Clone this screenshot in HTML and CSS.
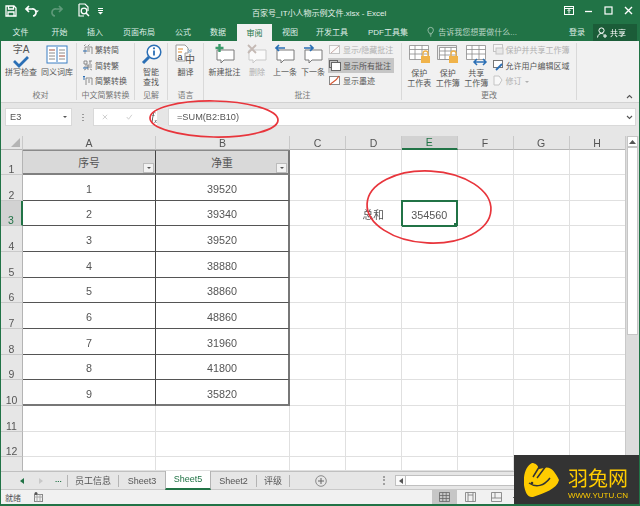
FILE: index.html
```html
<!DOCTYPE html>
<html lang="zh-CN">
<head>
<meta charset="utf-8">
<title>Excel</title>
<link rel="stylesheet" href="styles.css">
</head>
<body>
<div class="window">
  <header class="titlebar">
    <div class="qat">
      <svg class="q-save" width="14" height="14" viewBox="0 0 14 14"><path d="M2 2h8l2 2v8H2z M4.500 2v3h5V2 M4 12V8h6v4" fill="none" stroke="#fff" stroke-width="1.300"/></svg>
      <svg class="q-undo" width="16" height="14" viewBox="0 0 16 14"><path d="M5 2L2 5l3 3M2 5h6a3.500 3.500 0 0 1 1 7" fill="none" stroke="#fff" stroke-width="1.700"/><path d="M13 6.500h4l-2 2z" fill="#fff" transform="translate(-2 0)"/></svg>
      <svg class="q-redo" width="16" height="14" viewBox="0 0 16 14"><path d="M9 2l3 3-3 3M12 5H6a3.500 3.500 0 0 0-1 7" fill="none" stroke="#5f9a7a" stroke-width="1.700"/></svg>
      <svg class="q-prev" width="14" height="15" viewBox="0 0 14 15"><path d="M2 1h6l3 3v4M2 1v12h5" fill="none" stroke="#fff" stroke-width="1.200"/><circle cx="7" cy="8" r="2.800" fill="none" stroke="#fff" stroke-width="1.300"/><path d="M9 10l3 3" stroke="#fff" stroke-width="1.500"/></svg>
      <svg class="q-more" width="7" height="8" viewBox="0 0 7 8"><path d="M1 1.500h5M1 3.500h5" stroke="#fff"/><path d="M1 5h5L3.500 7.500z" fill="#fff"/></svg>
    </div>
    <div class="doc-title">百家号_IT小人物示例文件.xlsx - Excel</div>
    <div class="winctl">
      <svg width="10" height="9" viewBox="0 0 10 9"><rect x=".5" y=".5" width="9" height="8" fill="none" stroke="#fff"/><path d="M.5 2.500h9M5 3.500v4M3.500 5L5 3.500 6.500 5" fill="none" stroke="#fff"/></svg>
      <svg width="10" height="9" viewBox="0 0 10 9"><path d="M1 5.500h7" stroke="#fff" stroke-width="1.300"/></svg>
      <svg width="10" height="9" viewBox="0 0 10 9"><rect x="1" y="1" width="7" height="7" fill="none" stroke="#fff" stroke-width="1.200"/></svg>
      <svg width="10" height="9" viewBox="0 0 10 9"><path d="M1 1l7 7M8 1L1 8" stroke="#fff" stroke-width="1.400"/></svg>
    </div>
  </header>

  <nav class="tabs">
    <span class="tab tab-file">文件</span>
    <span class="tab">开始</span>
    <span class="tab">插入</span>
    <span class="tab">页面布局</span>
    <span class="tab">公式</span>
    <span class="tab">数据</span>
    <span class="tab tab-active">审阅</span>
    <span class="tab">视图</span>
    <span class="tab">开发工具</span>
    <span class="tab">PDF工具集</span>
    <span class="tell">
      <svg width="8" height="11" viewBox="0 0 8 11"><path d="M2.500 7.500C2 6 1 5.500 1 4a3 3 0 0 1 6 0c0 1.500-1 2-1.500 3.500zM3 9h2M3.300 10.400h1.400" fill="none" stroke="#b8d3c4" stroke-width=".8"/></svg>
      告诉我您想要做什么...
    </span>
    <span class="login">登录</span>
    <span class="share">
      <svg width="10" height="11" viewBox="0 0 10 11"><circle cx="4.500" cy="3.500" r="2.600" fill="none" stroke="#fff"/><path d="M.5 10.500c.5-3 2-4 4-4 1 0 1.500.3 2 .7M6 9h4M8 7v4" fill="none" stroke="#fff"/></svg>
      共享
    </span>
  </nav>

  <section class="ribbon">
    <div class="group g-proof">
      <div class="group-body">
        <div class="big w32">
          <div class="spell-ic">
            <span class="spell-t">字A</span>
            <svg width="18" height="13" viewBox="0 0 18 13"><path d="M2 6l5 5 9-9" fill="none" stroke="#2b6fb5" stroke-width="2.800"/></svg>
          </div>
          <span>拼写检查</span>
        </div>
        <div class="big w32 gap3">
          <svg width="22" height="21" viewBox="0 0 22 21"><rect x="1" y="2" width="20" height="17" fill="#fff" stroke="#3b7fc4"/><path d="M11 3v15" stroke="#3b7fc4"/><path d="M3 6h6M3 9h6M3 12h6M3 15h6M13 6h6M13 9h6M13 12h6M13 15h6" stroke="#8a8a8a"/><path d="M3 6h6M13 12h6" stroke="#d98a7a"/></svg>
          <span>同义词库</span>
        </div>
      </div>
      <div class="group-label">校对</div>
    </div>

    <div class="group g-conv">
      <div class="group-body list">
        <div class="line"><svg width="10" height="11" viewBox="0 0 10 11"><path d="M1 2l1.500-1.500M5 2l1.500-1.500M2 3h7v7M2 3v7M4 5h3M4 7h3" fill="none" stroke="#777" stroke-width=".8"/><path d="M0 7h4" stroke="#2b6fb5"/></svg><span>繁转简</span></div>
        <div class="line"><svg width="10" height="11" viewBox="0 0 10 11"><path d="M1 1h3v3H1zM6 1h3M7 1v3M2 5h7M1 7h8M5 5v5M3 9l-2 1M7 9l2 1" fill="none" stroke="#777" stroke-width=".8"/><path d="M0 8h5" stroke="#2b6fb5"/></svg><span>简转繁</span></div>
        <div class="line"><svg width="10" height="11" viewBox="0 0 10 11"><path d="M3 3h6v7M3 3v7M5 5h2M5 7h2" fill="none" stroke="#777" stroke-width=".8"/><path d="M1 1v4M0 2l1-1 1 1" fill="none" stroke="#2b6fb5"/></svg><span>简繁转换</span></div>
      </div>
      <div class="group-label">中文简繁转换</div>
    </div>

    <div class="group g-insight">
      <div class="group-body">
        <div class="big w32">
          <svg width="21" height="21" viewBox="0 0 21 21"><circle cx="13" cy="8" r="6.800" fill="#fff" stroke="#2b6fb5" stroke-width="1.500"/><path d="M8 13l-6 6" stroke="#2b6fb5" stroke-width="3"/><path d="M13 6.500v5" stroke="#2b6fb5" stroke-width="1.800"/><circle cx="13" cy="4.300" r="1.100" fill="#2b6fb5"/></svg>
          <span>智能<br>查找</span>
        </div>
      </div>
      <div class="group-label">见解</div>
    </div>

    <div class="group g-lang">
      <div class="group-body">
        <div class="big w36">
          <svg width="21" height="21" viewBox="0 0 21 21"><path d="M1 1h9l3 3v5h-3v8H1z" fill="#fff" stroke="#9a9a9a"/><path d="M3 5h5M3 8h4" stroke="#e08b2c"/><path d="M13 5l3 3m0-3v3h-3" fill="none" stroke="#7fa8cc" stroke-width=".9"/><text x="2.500" y="16" class="ic-a">a</text><text x="10" y="19" class="ic-s">中</text></svg>
          <span>翻译</span>
        </div>
      </div>
      <div class="group-label">语言</div>
    </div>

    <div class="group g-comment">
      <div class="group-body">
        <div class="big w33 first-c">
          <svg width="22" height="21" viewBox="0 0 22 21"><path d="M3 6h17v10H10l-3 3v-3H3z" fill="#fff" stroke="#7a7a7a"/><path d="M5.500 0v8M1.500 4h8" stroke="#3a9a6a" stroke-width="2.400"/></svg>
          <span>新建批注</span>
        </div>
        <div class="big w32 dim">
          <svg width="22" height="21" viewBox="0 0 22 21"><path d="M3 6h17v10H10l-3 3v-3H3z" fill="#fafafa" stroke="#c9c9c9"/><path d="M2 1l8 8M10 1L2 9" stroke="#c4b9b4" stroke-width="1.800"/></svg>
          <span>删除</span>
        </div>
        <div class="big w24">
          <svg width="22" height="21" viewBox="0 0 22 21"><path d="M3 6h17v10H10l-3 3v-3H3z" fill="#fff" stroke="#7a7a7a"/><path d="M11 4H2M5 1L2 4l3 3" fill="none" stroke="#2b6fb5" stroke-width="1.700"/></svg>
          <span>上一条</span>
        </div>
        <div class="big w24 gap4">
          <svg width="22" height="21" viewBox="0 0 22 21"><path d="M3 6h17v10H10l-3 3v-3H3z" fill="#fff" stroke="#7a7a7a"/><path d="M2 4h9M8 1l3 3-3 3" fill="none" stroke="#2b6fb5" stroke-width="1.700"/></svg>
          <span>下一条</span>
        </div>
        <div class="list c-list">
          <div class="line dim"><svg width="12" height="11" viewBox="0 0 12 11"><rect x=".5" y="1.500" width="10" height="8" fill="#fafafa" stroke="#c4c4c4"/><path d="M2 9l8-7" stroke="#c9a9a4"/></svg><span>显示/隐藏批注</span></div>
          <div class="line on"><svg width="12" height="11" viewBox="0 0 12 11"><rect x=".5" y=".5" width="8" height="7" fill="none" stroke="#666"/><rect x="2.500" y="2.500" width="9" height="8" fill="#fff" stroke="#666"/></svg><span>显示所有批注</span></div>
          <div class="line"><svg width="12" height="11" viewBox="0 0 12 11"><rect x=".5" y="1.500" width="10" height="8" fill="#fff" stroke="#888"/><path d="M1 10C3 6 6 8 10 1" fill="none" stroke="#d4532f" stroke-width="1.200"/></svg><span>显示墨迹</span></div>
        </div>
      </div>
      <div class="group-label">批注</div>
    </div>

    <div class="group g-change">
      <div class="group-body">
        <div class="big w28 first">
          <svg width="23" height="22" viewBox="0 0 23 22"><path d="M1.500 1.500h19v14h-19zM1.500 5.500h19M1.500 10h19M7 1.500v14M14 1.500v14" fill="#fff" stroke="#8a8a8a" stroke-width=".8"/><rect x="13" y="12" width="9" height="7" fill="#f0b34a"/><path d="M15 12V9.500a2.500 2.500 0 0 1 5 0V12" fill="none" stroke="#f0b34a" stroke-width="1.300"/></svg>
          <span>保护<br>工作表</span>
        </div>
        <div class="big w28">
          <svg width="23" height="22" viewBox="0 0 23 22"><path d="M1.500 1.500h19v14h-19z" fill="#eee" stroke="#8a8a8a" stroke-width=".8"/><path d="M3.500 3.500h17v12h-17zM3.500 7h17M3.500 11h17M9 3.500v12M15 3.500v12" fill="#fff" stroke="#8a8a8a" stroke-width=".8"/><rect x="13" y="12" width="9" height="7" fill="#f0b34a"/><path d="M15 12V9.500a2.500 2.500 0 0 1 5 0V12" fill="none" stroke="#f0b34a" stroke-width="1.300"/></svg>
          <span>保护<br>工作簿</span>
        </div>
        <div class="big w28">
          <svg width="23" height="22" viewBox="0 0 23 22"><path d="M1.500 1.500h19v14h-19zM1.500 5.500h19M1.500 10h19M7 1.500v14M14 1.500v14" fill="#fff" stroke="#8a8a8a" stroke-width=".8"/><path d="M9 18h12M12 15l-3 3 3 3M18 15l3 3-3 3" fill="none" stroke="#2b6fb5" stroke-width="1.500"/></svg>
          <span>共享<br>工作簿</span>
        </div>
        <div class="list d-list">
          <div class="line dim"><svg width="11" height="11" viewBox="0 0 11 11"><rect x=".5" y=".5" width="9" height="7" fill="#f6f6f6" stroke="#c4c4c4"/><rect x="3" y="4" width="7" height="6" fill="#e8e8e8" stroke="#c4c4c4"/></svg><span>保护并共享工作簿</span></div>
          <div class="line"><svg width="11" height="11" viewBox="0 0 11 11"><rect x=".5" y=".5" width="9" height="7" fill="#fff" stroke="#777"/><path d="M3 10l6-6" stroke="#2b6fb5" stroke-width="1.800"/></svg><span>允许用户编辑区域</span></div>
          <div class="line dim"><svg width="11" height="11" viewBox="0 0 11 11"><path d="M1 1h5l3 4-3 5H1z" fill="#f8f8f8" stroke="#c4c4c4"/></svg><span>修订 <i class="caret"></i></span></div>
        </div>
      </div>
      <div class="group-label">更改</div>
    </div>

    <div class="collapse"><svg width="7" height="5" viewBox="0 0 7 5"><path d="M1 4l2.500-2.500L6 4" fill="none" stroke="#555" stroke-width="1.100"/></svg></div>
  </section>

  <section class="fbar">
    <div class="namebox"><span>E3</span><i class="caret dark"></i></div>
    <div class="grip"></div>
    <div class="fbtns">
      <svg width="8" height="8" viewBox="0 0 8 8"><path d="M1 1l6 6M7 1L1 7" stroke="#c4c4c4" stroke-width="1.100"/></svg>
      <svg width="9" height="8" viewBox="0 0 9 8"><path d="M1 4l2.500 3L8 1" fill="none" stroke="#c4c4c4" stroke-width="1.100"/></svg>
      <em>f<sub>x</sub></em>
    </div>
    <div class="finput"><span>=SUM(B2:B10)</span><svg width="7" height="5" viewBox="0 0 7 5"><path d="M1 1l2.500 2.500L6 1" fill="none" stroke="#555" stroke-width="1.100"/></svg></div>
  </section>

  <main class="sheet-area">
    <div class="band"></div>
    <div class="grid-row">
      <div class="grid">
        <div class="corner"><i></i></div>
        <div class="ch">A</div><div class="ch">B</div><div class="ch">C</div><div class="ch">D</div><div class="ch ch-sel">E</div><div class="ch">F</div><div class="ch">G</div><div class="ch ch-end">H</div>

        <div class="rh">1</div><div class="c thead">序号<i class="filter"></i></div><div class="c thead thead-r">净重<i class="filter"></i></div><div class="c"></div><div class="c"></div><div class="c"></div><div class="c"></div><div class="c"></div><div class="c"></div>
        <div class="rh">2</div><div class="c td">1</div><div class="c td td-r">39520</div><div class="c"></div><div class="c"></div><div class="c"></div><div class="c"></div><div class="c"></div><div class="c"></div>
        <div class="rh rh-sel">3</div><div class="c td">2</div><div class="c td td-r">39340</div><div class="c"></div><div class="c txt">总和</div><div class="c sel">354560<i class="handle"></i></div><div class="c"></div><div class="c"></div><div class="c"></div>
        <div class="rh">4</div><div class="c td">3</div><div class="c td td-r">39520</div><div class="c"></div><div class="c"></div><div class="c"></div><div class="c"></div><div class="c"></div><div class="c"></div>
        <div class="rh">5</div><div class="c td">4</div><div class="c td td-r">38880</div><div class="c"></div><div class="c"></div><div class="c"></div><div class="c"></div><div class="c"></div><div class="c"></div>
        <div class="rh">6</div><div class="c td">5</div><div class="c td td-r">38860</div><div class="c"></div><div class="c"></div><div class="c"></div><div class="c"></div><div class="c"></div><div class="c"></div>
        <div class="rh">7</div><div class="c td">6</div><div class="c td td-r">48860</div><div class="c"></div><div class="c"></div><div class="c"></div><div class="c"></div><div class="c"></div><div class="c"></div>
        <div class="rh">8</div><div class="c td">7</div><div class="c td td-r">31960</div><div class="c"></div><div class="c"></div><div class="c"></div><div class="c"></div><div class="c"></div><div class="c"></div>
        <div class="rh">9</div><div class="c td">8</div><div class="c td td-r">41800</div><div class="c"></div><div class="c"></div><div class="c"></div><div class="c"></div><div class="c"></div><div class="c"></div>
        <div class="rh">10</div><div class="c td td-b">9</div><div class="c td td-r td-b">35820</div><div class="c"></div><div class="c"></div><div class="c"></div><div class="c"></div><div class="c"></div><div class="c"></div>
        <div class="rh">11</div><div class="c"></div><div class="c"></div><div class="c"></div><div class="c"></div><div class="c"></div><div class="c"></div><div class="c"></div><div class="c"></div>
        <div class="rh">12</div><div class="c"></div><div class="c"></div><div class="c"></div><div class="c"></div><div class="c"></div><div class="c"></div><div class="c"></div><div class="c"></div>
        <div class="rh rh-cut"></div><div class="c"></div><div class="c"></div><div class="c"></div><div class="c"></div><div class="c"></div><div class="c"></div><div class="c"></div><div class="c"></div>
      </div>
      <div class="vscroll">
        <div class="vbtn"><svg width="7" height="4" viewBox="0 0 7 4"><path d="M0 4l3.500-4L7 4z" fill="#555"/></svg></div>
        <div class="vthumb"></div>
      </div>
    </div>
    <div class="sheetbar">
      <div class="nav">
        <svg width="4" height="6" viewBox="0 0 4 6"><path d="M4 0v6L0 3z" fill="#217346"/></svg>
        <svg width="4" height="6" viewBox="0 0 4 6"><path d="M0 0v6l4-3z" fill="#c9c9c9"/></svg>
        <span class="dots">...</span>
      </div>
      <div class="stab">员工信息</div>
      <div class="stab">Sheet3</div>
      <div class="stab stab-on">Sheet5</div>
      <div class="stab">Sheet2</div>
      <div class="stab">评级</div>
      <div class="plus"><svg width="12" height="12" viewBox="0 0 12 12"><circle cx="6" cy="6" r="5.300" fill="none" stroke="#8a8a8a"/><path d="M3 6h6M6 3v6" stroke="#666"/></svg></div>
      <div class="vdots"></div>
      <div class="hscroll"><span class="hbtn"><svg width="4" height="6" viewBox="0 0 4 6"><path d="M4 0v6L0 3z" fill="#555"/></svg></span></div>
    </div>
  </main>

  <footer class="status">
    <span class="ready">就绪</span>
    <svg class="macro" width="10" height="10" viewBox="0 0 10 10"><rect x=".5" y="2.500" width="8" height="7" fill="none" stroke="#888"/><path d="M.5 5h8M3 2.500v7M6 2.500v7" stroke="#aaa"/><circle cx="2" cy="1.500" r="1.500" fill="#555"/></svg>
    <div class="views">
      <span class="view view-on"><svg width="11" height="10" viewBox="0 0 11 10"><path d="M.5.500h10v9H.5zM.5 3.500h10M.5 6.500h10M3.800.5v9M7.200.5v9" fill="none" stroke="#666" stroke-width=".8"/></svg></span>
      <span class="view"><svg width="11" height="10" viewBox="0 0 11 10"><path d="M.5.500h10v9H.5zM3 .5v9M8 .5v9M3 3h5" fill="none" stroke="#777" stroke-width=".8"/></svg></span>
      <span class="view"><svg width="11" height="10" viewBox="0 0 11 10"><path d="M.5.500h10v9H.5zM.5 6h10M4 .5V6" fill="none" stroke="#777" stroke-width=".8"/></svg></span>
      <span class="zoomminus"></span>
    </div>
  </footer>

  <svg class="marks" width="640" height="506" viewBox="0 0 640 506">
    <ellipse cx="214" cy="119" rx="64" ry="18" fill="none" stroke="#e8353c" stroke-width="1.700" transform="rotate(1 214 119)"/>
    <ellipse cx="429" cy="207" rx="62" ry="36" fill="none" stroke="#e8353c" stroke-width="1.700" transform="rotate(3 429 207)"/>
  </svg>

  <aside class="badge">
    <svg width="36" height="36" viewBox="0 0 36 36"><path d="M8 0C11 0 14 2 15 6L20 5C27 3 31 9 35 17 33 26 20 30 9 34 3 35 1 28 0 22-1 12 2 3 8 0z" fill="#ffcc00"/><path d="M9 14L17 1M13 15L22 3" stroke="#333" stroke-width="1.500"/><circle cx="8" cy="20" r="1.300" fill="#333"/><path d="M5 20C12 25 20 23 26 15" fill="none" stroke="#333" stroke-width="1.500"/></svg>
    <div class="brand">
      <strong>羽兔网</strong>
      <small>WWW.YUTU.CN</small>
    </div>
  </aside>
</div>
</body>
</html>
```

FILE: styles.css
```css
* { box-sizing: border-box; }
html, body { margin: 0; padding: 0; }
body {
  width: 640px;
  height: 506px;
  overflow: hidden;
  background: #fff;
  font-family: "Liberation Sans", "Noto Sans CJK SC", sans-serif;
  color: #555;
}
.window {
  position: relative;
  width: 640px;
  height: 506px;
  display: flex;
  flex-direction: column;
  border-left: 1px solid #217346;
  border-bottom: 2px solid #217346;
  border-right: 1px solid #217346;
  overflow: hidden;
  filter: blur(.3px);
}

/* title */
.titlebar {
  height: 24px;
  flex: none;
  background: #217346;
  color: #e6f0ea;
  display: flex;
  align-items: center;
}
.qat { display: flex; align-items: center; padding-left: 3px; height: 100%; margin-top: -3px; }
.qat svg { flex: none; }
.q-undo { margin-left: 6px; }
.q-redo { margin-left: 10px; }
.q-prev { margin-left: 11px; }
.q-more { margin-left: 5.500px; }
.doc-title {
  margin-left: 148.500px;
  font-size: 8px;
  white-space: nowrap;
}
.winctl { margin-left: auto; display: flex; gap: 10px; padding-right: 5px; margin-top: -4px; }

/* tabs */
.tabs {
  height: 17px;
  flex: none;
  background: #217346;
  color: #dfeee6;
  display: flex;
  align-items: stretch;
  font-size: 8px;
  white-space: nowrap;
}
.tab { display: flex; align-items: center; justify-content: center; flex: none; padding-bottom: 2px; }
.tab:nth-child(1) { width: 39px; }
.tab:nth-child(2) { width: 39px; }
.tab:nth-child(3) { width: 32px; }
.tab:nth-child(4) { width: 56px; }
.tab:nth-child(5) { width: 32px; }
.tab:nth-child(6) { width: 38px; }
.tab:nth-child(7) { width: 35px; }
.tab:nth-child(8) { width: 36px; }
.tab:nth-child(9) { width: 48px; }
.tab:nth-child(10) { width: 64px; }
.tab-active { background: #f1f1f1; color: #217346; padding-bottom: 1px; }
.tell { display: flex; align-items: center; flex: none; gap: 4px; margin-left: 7px; width: 90px; color: #b8d3c4; padding-bottom: 2px; }
.login { display: flex; align-items: center; flex: none; margin-left: 52px; padding-bottom: 2px; }
.share {
  display: flex;
  align-items: center;
  flex: none;
  gap: 3px;
  margin-left: 8px;
  width: 44px;
  padding-left: 4px;
  padding-bottom: 1px;
  background: #1b5c38;
  color: #fff;
}

/* ribbon */
.ribbon {
  height: 62px;
  flex: none;
  background: #f1f1f1;
  display: flex;
  position: relative;
  border-bottom: 1px solid #d2d2d2;
  font-size: 8px;
  padding-left: 4px;
}
.group {
  display: flex;
  flex-direction: column;
  border-right: 1px solid #d9d9d9;
  margin: 2px 0 2px;
}
.group-body { flex: 1; min-height: 0; display: flex; }
.group-label { height: 8px; flex: none; text-align: center; color: #777; line-height: 8px; white-space: nowrap; }
.g-proof { width: 72px; }
.g-conv { width: 58px; }
.g-insight { width: 33px; }
.g-lang { width: 36px; }
.g-comment { width: 198px; }
.g-change { width: 175px; }
.big {
  display: flex;
  flex-direction: column;
  align-items: center;
  text-align: center;
  line-height: 10px;
  padding-top: 1px;
}
.big svg { margin-bottom: 3px; flex: none; }
.big span { white-space: nowrap; }
.spell-ic { width: 22px; height: 24px; display: flex; flex-direction: column; align-items: center; }
.big .spell-t { font-size: 10px; line-height: 11px; color: #555; }
.spell-ic svg { margin: 0; flex: none; }
.w32 { width: 32px; }
.w33 { width: 33px; }
.w36 { width: 35px; }
.w24 { width: 24px; }
.w28 { width: 28.500px; }
.first { margin-left: 3px; }
.first-c { margin-left: 4px; }
.gap3 { margin-left: 4px; }
.gap4 { margin-left: 4px; }
.dim { color: #b0b0b0; }
.list { display: flex; flex-direction: column; margin-top: -1px; }
.g-conv .list { padding-left: 5px; }
.line {
  height: 15.500px;
  flex: none;
  display: flex;
  align-items: center;
  gap: 2px;
  white-space: nowrap;
  padding: 0 1px;
}
.line svg { flex: none; }
.on { background: #c6c6c6; }
.c-list { margin-left: 3px; }
.d-list { margin-left: 1px; }
.ic-s { font-size: 10px; fill: #555; font-family: "Noto Sans CJK SC", sans-serif; }
.ic-a { font-size: 9px; fill: #333; }
.caret { display: inline-block; width: 0; height: 0; border: 2px solid transparent; border-top: 2.500px solid #b0b0b0; border-bottom: 0; vertical-align: middle; margin-left: 1px; }
.caret.dark { border-top-color: #555; }
.collapse { position: absolute; right: 6px; bottom: 3px; line-height: 0; }

/* formula bar */
.fbar {
  height: 27px;
  flex: none;
  background: #e6e6e6;
  display: flex;
  align-items: center;
  padding: 1px 3px 0 4px;
  font-size: 9.200px;
}
.namebox {
  width: 67px;
  height: 18px;
  background: #fff;
  border: 1px solid #d9d9d9;
  display: flex;
  align-items: center;
  justify-content: space-between;
  padding: 0 4px;
}
.grip { width: 21px; height: 9px; background: radial-gradient(circle, #999 .7px, transparent 1px) 10px 0 / 2px 3px repeat-y; }
.fbtns {
  width: 64px;
  height: 18px;
  background: #fff;
  border: 1px solid #d9d9d9;
  border-right: 0;
  display: flex;
  align-items: center;
  gap: 18px;
  padding-left: 8px;
  color: #444;
}
.fbtns em { font-family: "Liberation Serif", serif; font-size: 10px; margin-left: 1px; }
.fbtns sub { font-size: 6px; }
.finput {
  flex: 1;
  height: 18px;
  margin-left: 11px;
  background: #fff;
  border: 1px solid #d9d9d9;
  display: flex;
  align-items: center;
  justify-content: space-between;
  padding: 0 2px 0 8px;
}

/* sheet */
.sheet-area { flex: 1; background: #e6e6e6; display: flex; flex-direction: column; min-height: 0; }
.band { height: 6px; flex: none; }
.grid-row { display: flex; height: 335px; flex: none; }
.grid {
  display: grid;
  grid-template-columns: 22px 133px 134px 56px 56px 55.500px 56px 56px 56px;
  grid-template-rows: 14px 25px repeat(11, 25.670px) 14px;
  background: #fff;
  width: 624px;
  overflow: hidden;
}
.corner { background: #e6e6e6; position: relative; border-right: 1px solid #c9c9c9; border-bottom: 1px solid #b4b4b4; }
.corner i {
  position: absolute; right: 2px; bottom: 2px; width: 0; height: 0;
  border-left: 9px solid transparent; border-bottom: 9px solid #b4b4b4;
}
.ch {
  background: #e6e6e6;
  display: flex; align-items: center; justify-content: center;
  font-size: 10.500px;
  border-right: 1px solid #c9c9c9;
  border-bottom: 1px solid #b4b4b4;
}
.ch-sel { background: #d2d2d2; color: #217346; border-bottom: 2px solid #217346; }
.rh {
  background: #e6e6e6;
  display: flex; align-items: flex-end; justify-content: center;
  font-size: 10.500px; line-height: 9px;
  border-right: 1px solid #b4b4b4;
  border-bottom: 1px solid #c9c9c9;
}
.rh-sel { background: #d2d2d2; color: #217346; border-right: 2px solid #217346; }
.rh-cut { border-bottom: 0; }
.c {
  display: flex; align-items: center; justify-content: center;
  position: relative;
  font-size: 10.800px;
  border-right: 1px solid #e0e0e0;
  border-bottom: 1px solid #e0e0e0;
  padding-top: 3px;
}
.thead {
  background: #d9d9d9;
  border-right: 1px solid #444;
  border-top: 1px solid #8a8a8a;
  border-bottom: 2px solid #808080;
  padding-top: 0;
}
.thead-r { border-right: 2px solid #777; }
.td { border-right: 1px solid #444; border-bottom: 1px solid #555; }
.td-r { border-right: 2px solid #777; }
.td-b { border-bottom: 2px solid #777; }
.txt { justify-content: flex-end; padding-right: 17px; }
.sel { border: 2px solid #217346; margin: -1px 0 -1px -1px; }
.handle { position: absolute; right: -2px; bottom: -2px; width: 4px; height: 4px; background: #217346; }
.filter {
  position: absolute; right: 1px; bottom: 0;
  width: 11px; height: 10px;
  background: #f2f2f2;
  border: 1px solid #bcbcbc;
}
.filter::after {
  content: ""; position: absolute; left: 2.500px; top: 3px;
  border: 2px solid transparent; border-top: 2.500px solid #555; border-bottom: 0;
}
.vscroll { flex: 1; background: #dcdcdc; display: flex; flex-direction: column; align-items: center; border-left: 1px solid #c9c9c9; }
.vbtn { width: 11px; height: 11px; background: #fff; border: 1px solid #c6c6c6; display: flex; align-items: center; justify-content: center; }
.vthumb { width: 11px; height: 188px; background: #fff; border: 1px solid #c6c6c6; }

.sheetbar {
  height: 19px;
  flex: none;
  background: #e6e6e6;
  border-top: 1px solid #c0c0c0;
  border-bottom: 1px solid #c9c9c9;
  display: flex;
  align-items: center;
  font-size: 9px;
}
.nav { display: flex; align-items: center; width: 67px; padding-left: 19px; gap: 15px; border-right: 1px solid #b4b4b4; height: 12px; }
.dots { color: #217346; font-weight: bold; font-size: 8px; margin-top: -2px; margin-left: -3px; }
.stab {
  height: 12px; display: flex; align-items: center; justify-content: center;
  border-right: 1px solid #b4b4b4;
  width: 51px;
}
.stab:nth-child(3) { width: 46px; border-right: 0; }
.stab-on {
  height: 19px; width: 46px; background: #fff; color: #217346;
  border-left: 1px solid #b4b4b4; border-right: 1px solid #b4b4b4 !important;
  border-bottom: 2px solid #217346; margin-top: -1px;
}
.stab:nth-child(5) { width: 46px; }
.stab:nth-child(6) { width: 33px; }
.plus { margin-left: 25px; line-height: 0; }
.vdots { width: 2px; height: 9px; margin-left: 56px; border-left: 2px dotted #a0a0a0; }
.hscroll { flex: 1; margin-left: 10px; height: 11px; background: #fff; border: 1px solid #c0c0c0; }
.hbtn { display: flex; width: 10px; height: 100%; align-items: center; justify-content: center; border-right: 1px solid #c0c0c0; background: #fafafa; }

.status {
  height: 14px;
  flex: none;
  background: #f1f1f1;
  display: flex;
  align-items: center;
  font-size: 8px;
  padding-left: 4px;
}
.macro { margin-left: 13px; }
.views { margin-left: 388px; display: flex; align-items: center; height: 100%; }
.view { display: flex; width: 25px; height: 100%; align-items: center; justify-content: center; margin-right: 1px; }
.view-on { background: #c6c6c6; }
.zoomminus { width: 5px; height: 1px; background: #666; margin-left: 3px; }

/* overlays */
.marks { position: absolute; left: -1px; top: 0; pointer-events: none; }
.badge {
  position: absolute;
  right: -1px; bottom: -2px;
  width: 126px; height: 51px;
  background: #333;
  display: flex;
  align-items: center;
  padding-left: 10px;
  gap: 8px;
}
.brand { display: flex; flex-direction: column; align-items: flex-start; color: #ffcc00; margin-top: 8px; }
.brand strong { font-family: "Noto Sans CJK SC", sans-serif; font-weight: 400; font-size: 20px; line-height: 22px; }
.brand small { font-size: 8px; line-height: 12px; margin-top: 1px; white-space: nowrap; }
```
